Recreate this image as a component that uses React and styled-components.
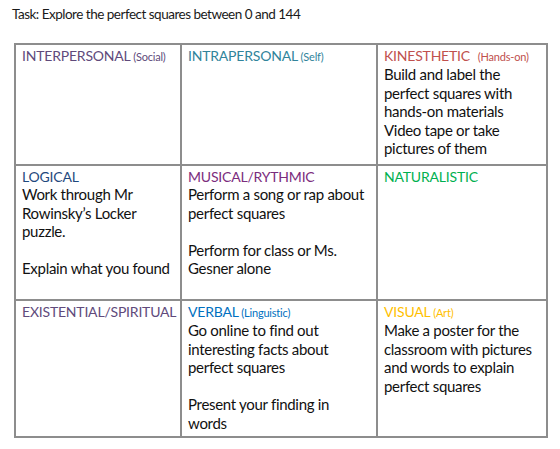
import React from "react";
import styled, { createGlobalStyle } from "styled-components";

const GlobalStyle = createGlobalStyle`
  html, body {
    margin: 0;
    padding: 0;
    background: #ffffff;
  }
  body {
    font-family: Lato, "Open Sans", sans-serif;
    color: #111111;
  }
`;

const Page = styled.div`
  width: 560px;
  height: 449px;
  padding: 5px 0 0 12px;
  box-sizing: border-box;
`;

const Title = styled.div`
  font-size: 13.5px;
  letter-spacing: -0.5px;
  line-height: 19px;
  height: 38px;
  color: #1a1a1a;
`;

const Grid = styled.div`
  display: grid;
  grid-template-columns: 164px 194px 168px;
  grid-template-rows: 119px 133px 135px;
  gap: 2px;
  padding: 2px;
  margin-left: 2px;
  width: max-content;
  background: #8d8d8d;
`;

const Cell = styled.div`
  background: #ffffff;
  padding: 2px 0 0 6px;
  font-size: 15px;
  letter-spacing: -0.3px;
  line-height: 18.6px;
  white-space: nowrap;
`;

const Heading = styled.div`
  color: ${(p) => p.$color};
  font-size: 14px;
  line-height: 17px;
  letter-spacing: -0.2px;
`;

const Note = styled.span`
  font-size: 11px;
  letter-spacing: -0.2px;
`;

const Line = styled.div``;

const Gap = styled.div`
  height: 18.6px;
`;

const cells = [
  { title: "INTERPERSONAL", note: "(Social)", color: "#604a7b", body: [] },
  { title: "INTRAPERSONAL", note: "(Self)", color: "#31849b", body: [] },
  {
    title: "KINESTHETIC",
    note: "\u00a0 (Hands-on)",
    color: "#c0504d",
    body: [
      "Build and label the",
      "perfect squares with",
      "hands-on materials",
      "Video tape or take",
      "pictures of them",
    ],
  },
  {
    title: "LOGICAL",
    color: "#1f497d",
    body: ["Work through Mr", "Rowinsky\u2019s Locker", "puzzle.", null, "Explain what you found"],
  },
  {
    title: "MUSICAL/RYTHMIC",
    color: "#7b2c7d",
    body: ["Perform a song or rap about", "perfect squares", null, "Perform for class or Ms.", "Gesner alone"],
  },
  { title: "NATURALISTIC", color: "#00b050", body: [] },
  { title: "EXISTENTIAL/SPIRITUAL", color: "#604a7b", body: [] },
  {
    title: "VERBAL",
    note: "(Linguistic)",
    color: "#0070c0",
    body: ["Go online to find out", "interesting facts about", "perfect squares", null, "Present your finding in", "words"],
  },
  {
    title: "VISUAL",
    note: "(Art)",
    color: "#ffc000",
    body: ["Make a poster for the", "classroom with pictures", "and words to explain", "perfect squares"],
  },
];

export default function App() {
  return (
    <>
      <GlobalStyle />
      <Page>
        <Title>Task: Explore the perfect squares between 0 and 144</Title>
        <Grid>
          {cells.map((c) => (
            <Cell key={c.title}>
              <Heading $color={c.color}>
                {c.title}
                {c.note && <Note> {c.note}</Note>}
              </Heading>
              {c.body.map((line, i) =>
                line === null ? <Gap key={i} /> : <Line key={i}>{line}</Line>
              )}
            </Cell>
          ))}
        </Grid>
      </Page>
    </>
  );
}
